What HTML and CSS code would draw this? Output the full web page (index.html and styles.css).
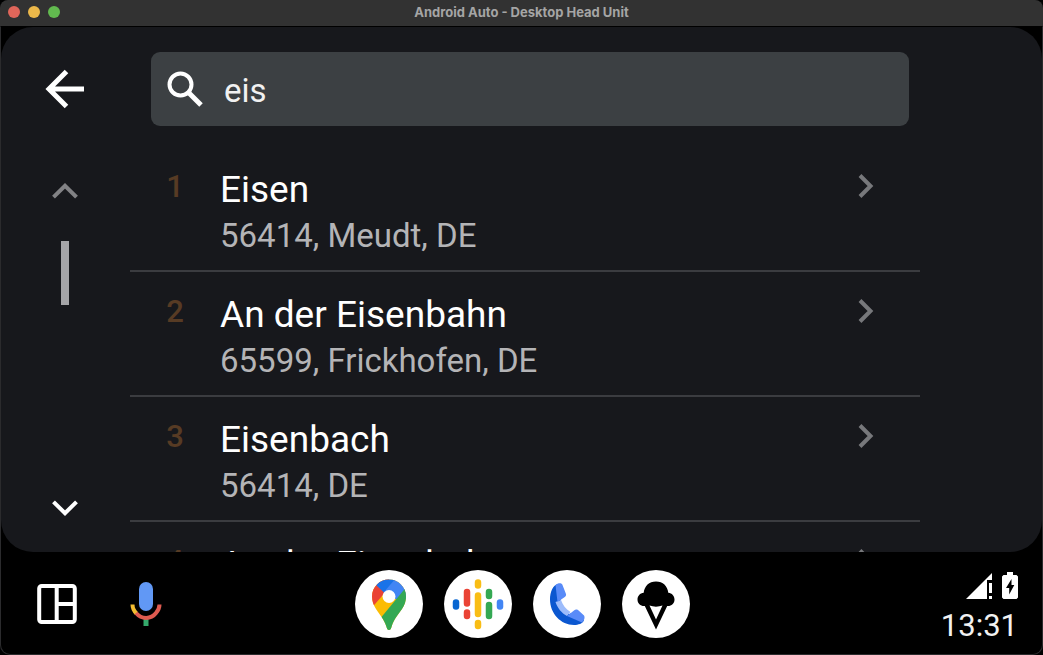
FILE: index.html
```html
<!DOCTYPE html>
<html lang="en">
<head>
<meta charset="utf-8">
<meta name="viewport" content="width=device-width, initial-scale=1">
<title>Android Auto - Desktop Head Unit</title>
<link rel="stylesheet" href="styles.css">
</head>
<body>
<header class="titlebar">
  <div class="lights">
    <button class="light light-close" aria-label="Close"></button>
    <button class="light light-min" aria-label="Minimize"></button>
    <button class="light light-max" aria-label="Zoom"></button>
  </div>
  <h1 class="window-title">Android Auto - Desktop Head Unit</h1>
</header>
<div class="screen">
  <main class="panel">
    <div class="rail">
      <button class="icon-button back" aria-label="Back">
        <svg width="40" height="40" viewBox="0 0 40 40" fill="none" stroke="#fff" stroke-width="5"><path d="M39 20H4M21.500 2.500L4 20l17.500 17.500"/></svg>
      </button>
      <div class="scroller">
        <button class="icon-button" aria-label="Scroll up">
          <svg width="26" height="16" viewBox="0 0 26 16" fill="none" stroke="#828285" stroke-width="4"><path d="M1.500 14.200L13 2.800l11.500 11.400"/></svg>
        </button>
        <div class="track"><div class="thumb"></div></div>
        <button class="icon-button" aria-label="Scroll down">
          <svg width="26" height="16" viewBox="0 0 26 16" fill="none" stroke="#fff" stroke-width="4"><path d="M1.500 1.800L13 13.200 24.500 1.800"/></svg>
        </button>
      </div>
    </div>
    <div class="content">
      <label class="search">
        <svg width="36" height="36" viewBox="0 0 36 36" fill="none" stroke="#fff" stroke-width="4"><circle cx="13.500" cy="13.500" r="11"/><path d="M21.500 21.500L34 34" stroke-width="5"/></svg>
        <input class="search-input" type="text" value="eis" aria-label="Search">
      </label>
      <ul class="results">
        <li class="row"><button class="result"><span class="num">1</span><span class="texts"><span class="name">Eisen</span><span class="place">56414, Meudt, DE</span></span><svg class="chev" width="16" height="24" viewBox="0 0 16 24"><path d="M2 1.500L12.500 12 2 22.500"/></svg></button></li>
        <li class="row"><button class="result"><span class="num">2</span><span class="texts"><span class="name">An der Eisenbahn</span><span class="place">65599, Frickhofen, DE</span></span><svg class="chev" width="16" height="24" viewBox="0 0 16 24"><path d="M2 1.500L12.500 12 2 22.500"/></svg></button></li>
        <li class="row"><button class="result"><span class="num">3</span><span class="texts"><span class="name">Eisenbach</span><span class="place">56414, DE</span></span><svg class="chev" width="16" height="24" viewBox="0 0 16 24"><path d="M2 1.500L12.500 12 2 22.500"/></svg></button></li>
        <li class="row"><button class="result"><span class="num">4</span><span class="texts"><span class="name">An der Eisenbahn</span></span><svg class="chev" width="16" height="24" viewBox="0 0 16 24"><path d="M2 1.500L12.500 12 2 22.500"/></svg></button></li>
      </ul>
    </div>
  </main>
  <footer class="dock">
    <div class="tools">
      <button class="icon-button" aria-label="Dashboard">
        <svg width="40" height="42" viewBox="0 0 40 42" fill="none" stroke="#fff" stroke-width="4"><rect x="2.200" y="3" width="35.600" height="36" rx="2.500"/><path d="M19.700 3v36M19.700 21H38"/></svg>
      </button>
      <button class="icon-button" aria-label="Voice assistant">
        <svg width="32" height="46" viewBox="0 0 32 46" fill="none"><path d="M16 38v7" stroke="#34a86b" stroke-width="5"/><path d="M2.500 23.500c0 4 1.500 6.500 4 9" stroke="#f3bd31" stroke-width="4"/><path d="M6 32c5.500 6.500 15 6.500 20 0 2.200-2.500 3.500-5 3.500-8.500" stroke="#df5b50" stroke-width="4"/><rect x="9" y="1" width="14" height="29" rx="7" fill="#6198f5"/></svg>
      </button>
    </div>
    <nav class="apps">
      <button class="icon-button app" aria-label="Maps">
        <svg width="68" height="68" viewBox="0 0 68 68"><clipPath id="pin"><path d="M34 60c-1.700 0-2-1.500-2.800-4-2.300-7-6.700-11.500-10.200-17-2.500-4-4-8-4-12.500C17 17 24.600 9.500 34 9.500S51 17 51 26.500c0 4.500-1.300 8.500-4 12.500-3.800 5.600-8 10-10.200 17-.8 2.500-1.100 4-2.800 4z"/></clipPath><g clip-path="url(#pin)"><path d="M12 5h44v58H12z" fill="#fbbc04"/><path d="M8 48L34 18V5H8z" fill="#ea4335"/><path d="M21.500 15.500L29.500 23 40 11V5H21z" fill="#1a73e8"/><path d="M28.500 22.500L42 7h14v22H38z" fill="#4285f4"/><path d="M26.500 47L50.500 18H60v45H26.500z" fill="#34a853"/></g><circle cx="34" cy="26.500" r="6.500" fill="#fff"/></svg>
      </button>
      <button class="icon-button app" aria-label="Podcasts">
        <svg width="68" height="68" viewBox="0 0 68 68" fill="none" stroke-width="6.500" stroke-linecap="round"><path d="M12 32.500v4" stroke="#0866d1"/><path d="M23 22v11.500M23 42.500v3.500" stroke="#ea4335"/><path d="M34 12.500v3M34 25.500v18.500M34 53v3" stroke="#f9bd15"/><path d="M45 22v4M45 35v11" stroke="#34a853"/><path d="M56 32.500v4" stroke="#4285f4"/></svg>
      </button>
      <button class="icon-button app" aria-label="Phone">
        <svg width="68" height="68" viewBox="0 0 68 68"><path d="M25 14c-5 1-8 8-8 15.500C17 43.500 28 55 41 55c4.500 0 8.500-1.500 10-4.500L42 42l-6 2c-4-2.500-7-6.500-9-11.500l1-5z" fill="#0b57d0"/><path d="M22.500 32l5.500-2c1.800 5 4.500 9 9.500 12L34 46c-5.500-3-9.500-8-11.500-14z" fill="#9dbcfb"/><path d="M22.500 15c2-1.800 5.500-2.500 6.800-.5l3.500 9c.6 1.500.2 2.800-1 3.500L24.500 32z" fill="#598bf8"/><path d="M34 46l7-5.500c1.300-1 2.500-1.200 4-.4l5.500 5c1.600 1.400 1.500 4.500-1.500 7.400z" fill="#598bf8"/></svg>
      </button>
      <button class="icon-button app" aria-label="Ice cream">
        <svg width="68" height="68" viewBox="0 0 68 68"><path d="M34 11.500c-7 0-11.500 4.500-12.300 11.300C18 23.200 15.500 26 15.500 29.500c0 4 3 6.500 6.500 6.500h.800L34 59.500 45.200 36h.8c3.500 0 6.500-2.500 6.500-6.500 0-3.500-2.500-6.300-6.200-6.700C45.500 16 41 11.500 34 11.500z"/><path d="M27.500 35.500c4 1.500 9 1.500 13 0L34 49.500z" fill="#fff"/></svg>
      </button>
    </nav>
    <div class="status">
      <div class="indicators">
        <svg width="27" height="28" viewBox="0 0 27 28" fill="#fff"><path d="M0 27L26 1v7h-5v19zM23 11h3v10h-3zM23 24h3v3h-3z"/></svg>
        <svg width="16" height="28" viewBox="0 0 16 28"><path d="M5 0h6v3h3.500L16 4.500v21L14.500 27h-13L0 25.500v-21L1.500 3H5z" fill="#fff"/><path d="M9.500 7L4 16h3.200v6.500L12.300 13H9.500z" fill="#000"/></svg>
      </div>
      <time class="clock">13:31</time>
    </div>
  </footer>
</div>
</body>
</html>
```
FILE: styles.css
```css
* { box-sizing: border-box; }

body {
  margin: 0;
  height: 100vh;
  display: flex;
  flex-direction: column;
  overflow: hidden;
  background: #000;
  color: #fff;
  font-family: Roboto, "Liberation Sans", sans-serif;
}

button {
  margin: 0;
  padding: 0;
  border: 0;
  background: none;
  color: inherit;
  font: inherit;
}

svg { display: block; }

.titlebar {
  flex: none;
  display: grid;
  grid-template-columns: 1fr auto 1fr;
  align-items: center;
  height: 26px;
  padding: 0 8px 2px;
  background: #323232;
  border-radius: 8px 8px 0 0;
}

.lights { display: flex; gap: 8px; }
.light { width: 12px; height: 12px; border-radius: 50%; }
.light-close { background: #e0665a; }
.light-min { background: #ecb84a; }
.light-max { background: #62ba4f; }

.window-title {
  margin: 0;
  color: #a5a5a5;
  font: bold 13px/16px Inter, sans-serif;
}

.screen {
  flex: 1;
  min-height: 0;
  display: flex;
  flex-direction: column;
  border: 1px solid #2b2b2d;
  border-top-color: #000;
  border-radius: 0 0 10px 10px;
}

.panel {
  flex: 1;
  min-height: 0;
  display: grid;
  grid-template-columns: 129px minmax(0, 1fr) 122px;
  grid-template-rows: minmax(0, 1fr);
  overflow: hidden;
  border-radius: 32px;
  background: #17181c;
}

.icon-button { display: block; flex: none; }

.rail {
  display: flex;
  flex-direction: column;
  align-items: center;
  gap: 74px;
  padding: 42px 1px 36px 0;
}

.scroller {
  flex: 1;
  display: flex;
  flex-direction: column;
  align-items: center;
  gap: 42px;
}

.track { flex: 1; }
.thumb { width: 8px; height: 64px; background: #a5a5a8; }

.content {
  display: flex;
  flex-direction: column;
  min-height: 0;
  padding-top: 25px;
}

.search {
  flex: none;
  display: flex;
  align-items: center;
  gap: 21px;
  height: 74px;
  margin: 0 11px 21px 21px;
  padding: 0 16px;
  border-radius: 9px;
  background: #3c4043;
}

.search-input {
  flex: 1;
  min-width: 0;
  padding: 4px 0 0;
  border: 0;
  outline: 0;
  background: none;
  color: #f1f1f1;
  font: 33px/40px Roboto, sans-serif;
}

.results {
  flex: 1;
  min-height: 0;
  margin: 0;
  padding: 0;
  overflow: hidden;
  list-style: none;
}

.row { border-bottom: 2px solid #3b3c40; }

.result {
  display: flex;
  align-items: flex-start;
  width: 100%;
  height: 123px;
  padding: 20px 46px 0 0;
  text-align: left;
}

.num {
  width: 90px;
  color: #573b24;
  font-size: 31px;
  font-weight: 500;
  line-height: 40px;
  text-align: center;
}

.texts { flex: 1; display: flex; flex-direction: column; }
.name { font-size: 37px; line-height: 46px; }
.place { color: #b4b4b6; font-size: 33px; line-height: 46px; }

.chev {
  margin-top: 7px;
  fill: none;
  stroke: #77787b;
  stroke-width: 4;
}

.dock {
  flex: none;
  display: grid;
  grid-template-columns: 1fr auto 1fr;
  align-items: center;
  height: 102px;
  padding: 2px 24px 0 36px;
}

.tools { display: flex; align-items: center; gap: 53px; }
.apps { display: flex; gap: 21px; margin-right: 10px; }
.app { border-radius: 50%; background: #fff; }

.status {
  display: flex;
  flex-direction: column;
  align-items: flex-end;
  padding-top: 16px;
}

.indicators { display: flex; gap: 9px; }

.clock {
  color: #f1f1f1;
  font-size: 31px;
  line-height: 52px;
}
```
